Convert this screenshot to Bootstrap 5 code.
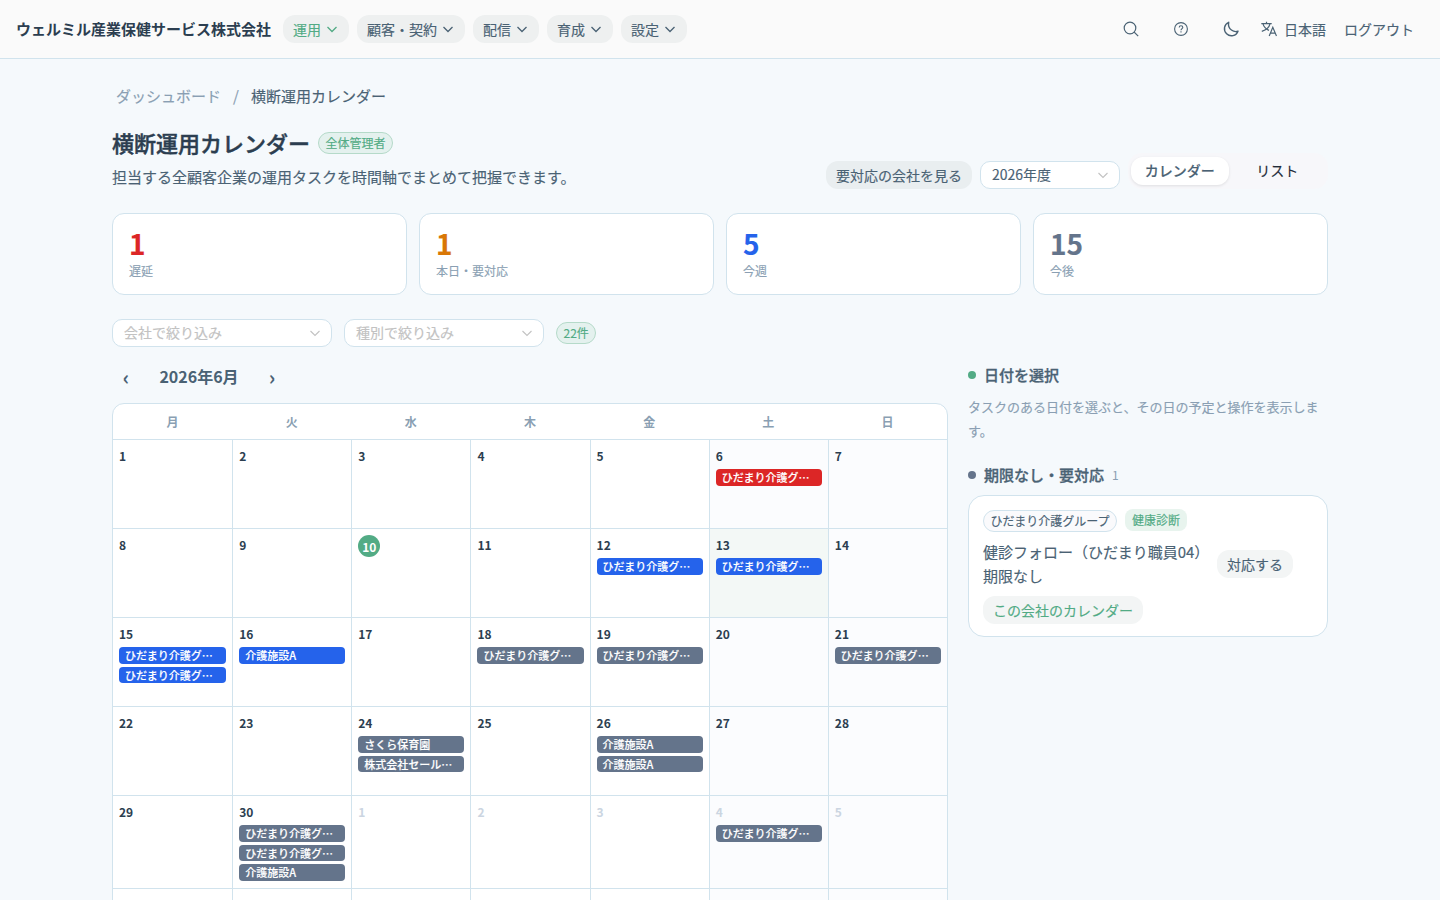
<!DOCTYPE html>
<html lang="ja">
<head>
<meta charset="utf-8">
<meta name="viewport" content="width=device-width, initial-scale=1">
<title>横断運用カレンダー</title>
<link href="https://cdn.jsdelivr.net/npm/bootstrap@5.3.0/dist/css/bootstrap.min.css" rel="stylesheet">
<style>
:root{--ink:#2c3e50;--sub:#4a6274;--mute:#8a9fb3;--line:#d1e3ed;--green:#52ab85;--slate:#64748b;--red:#dc2626;--amber:#d97706;--blue:#2563eb}
html,body{height:900px;overflow:hidden}
body{font-family:"Noto Sans CJK JP",sans-serif;font-size:15px;line-height:24px;background:#f5f9fc;color:var(--sub);-webkit-text-stroke:.15px}
svg{fill:none;stroke:currentColor;flex:none;display:block}
.topbar{height:59px;background:#fafafa;border-bottom:1px solid var(--line);padding:0 16px!important}
.brand{font-weight:700;color:var(--ink);margin-right:12px;-webkit-text-stroke:0}
.pill{--bs-btn-padding-x:10px;--bs-btn-padding-y:0;height:28px;font-size:14px;line-height:26px;border:0;border-radius:12px;background:#eef0f0;color:var(--sub);display:inline-flex;align-items:center;white-space:nowrap;font-weight:400;padding-bottom:1px}
.pill.on,.go{color:var(--green)}
.navtext{font-size:14px;line-height:26px;padding-bottom:1px}
.icobtn{width:50px;display:flex;justify-content:center}
.wrap{width:1216px;margin:0 auto}
.crumbs{height:24px;margin-top:25px;padding-left:4px}
.title{font-size:22px;line-height:30px;font-weight:500;color:var(--ink);margin:0;-webkit-text-stroke:.45px}
.tag{font-size:12px;line-height:20px;height:22px;border:1px solid #b5dac9;border-radius:11px;background:#e4f1ee;color:var(--green);padding:0 6.500px;font-weight:400;white-space:nowrap}
.sel{height:28px;background:#fff;border:1px solid var(--line);border-radius:10px;padding:0 11px;font-size:14px;line-height:26px;font-weight:400;display:flex;align-items:center;justify-content:space-between}
.sel>span{margin-top:-2px}
.sel svg{color:#c2c2c2;margin-right:-1px}
.ph{color:#c2c2c2}
.seg{width:200px;height:36px;background:#f7f7fa;border-radius:14px;padding:4px 2px 4px 3px;color:#222b38;font-size:14px}
.seg span{flex:1;height:28px;line-height:27px;text-align:center;border-radius:12px}
.seg .on{background:#fff;color:var(--sub);box-shadow:0 1px 3px rgba(0,0,0,.1);font-weight:500}
.stats{display:grid;grid-template-columns:repeat(4,1fr);gap:12px}
.stat{height:82px;border:1px solid var(--line);border-radius:12px;background:#fff;padding:13px 16px}
.stat b{display:block;font-size:28px;line-height:33px;font-weight:700}
.stat span{display:block;font-size:12px;line-height:18px;color:var(--mute);margin-top:2px;font-weight:400}
.cal{width:836px;border:1px solid var(--line);border-radius:12px 12px 0 0;background:#fff;overflow:hidden}
.days{display:grid;grid-template-columns:repeat(7,1fr);-webkit-text-stroke:0}
.wd{height:35px;line-height:36px;font-size:12px;font-weight:600;text-align:center;color:var(--mute)}
.cell{border-top:1px solid var(--line);border-left:1px solid var(--line);min-height:89px;padding:6px 6px 4.500px;min-width:0}
.cell:nth-child(7n+1){border-left:0}
.cell:nth-child(7n),.cell:nth-child(7n+6){background:#fbfcfe}
.cell.pick{background:#f3f8f6!important}
.num{font-size:12px;line-height:19px;height:19px;margin-bottom:4px;font-weight:600;color:var(--ink)}
.num.off{color:#cbd5e1}
.num i{display:block;font-style:normal;width:22px;height:22px;line-height:24px;border-radius:50%;background:var(--green);color:#fff;text-align:center;font-weight:700}
.ev{font-size:11px;line-height:16.500px;height:16.500px;border-radius:4px;padding:0 6px;color:#fff;background:var(--slate);font-weight:500;margin-bottom:3px;overflow:hidden;white-space:nowrap;text-overflow:ellipsis;-webkit-text-stroke:.15px}
.ev.b{background:var(--blue)}.ev.r{background:var(--red)}
.side{width:360px}
.dot{width:8px;height:8px;border-radius:50%;background:var(--green);margin-right:8px}
.shead{height:24px;font-weight:500;-webkit-text-stroke:.3px}
.hint{font-size:13px;line-height:24px;color:var(--mute);margin:8px 0 20px}
.task{border:1px solid var(--line);border-radius:16px;background:#fff;height:142px;padding:13px 14px 12px}
.co{border-color:var(--line);background:#fafafc;color:var(--sub)}
.kind{border:0;border-radius:8px;background:#e8f4ee;line-height:22px;padding:0 7px}
.soft{background:#f3f5f5}
.arrow{width:28px;font-size:20px;padding-top:1px;text-align:center}
</style>
</head>
<body>
<nav class="topbar navbar d-flex flex-nowrap justify-content-start align-items-center">
  <span class="brand">ウェルミル産業保健サービス株式会社</span>
  <div class="d-flex gap-2">
    <button class="btn pill on">運用<svg class="ms-1" width="14" height="14" viewBox="0 0 14 14" stroke-width="1.300"><path d="M2.500 5 7 9.500 11.500 5"/></svg></button>
    <button class="btn pill">顧客・契約<svg class="ms-1" width="14" height="14" viewBox="0 0 14 14" stroke-width="1.300"><path d="M2.500 5 7 9.500 11.500 5"/></svg></button>
    <button class="btn pill">配信<svg class="ms-1" width="14" height="14" viewBox="0 0 14 14" stroke-width="1.300"><path d="M2.500 5 7 9.500 11.500 5"/></svg></button>
    <button class="btn pill">育成<svg class="ms-1" width="14" height="14" viewBox="0 0 14 14" stroke-width="1.300"><path d="M2.500 5 7 9.500 11.500 5"/></svg></button>
    <button class="btn pill">設定<svg class="ms-1" width="14" height="14" viewBox="0 0 14 14" stroke-width="1.300"><path d="M2.500 5 7 9.500 11.500 5"/></svg></button>
  </div>
  <div class="d-flex align-items-center ms-auto">
    <span class="icobtn"><svg width="18" height="18" viewBox="0 0 18 18" stroke-width="1.200"><circle cx="8" cy="8" r="5.800"/><path d="m12.200 12.200 4 4"/></svg></span>
    <span class="icobtn"><svg width="16" height="16" viewBox="0 0 16 16" stroke-width="1.100"><circle cx="8" cy="8" r="6.400"/><path d="M6.200 6.500c0-1 .8-1.700 1.800-1.700s1.800.7 1.800 1.600c0 1.200-1.800 1.300-1.800 2.900"/><path d="M8 10.300v1.100"/></svg></span>
    <span class="icobtn"><svg width="18" height="18" viewBox="0 0 18 18" stroke-width="1.400" stroke-linejoin="round"><path d="M6.700 2.300A7 7 0 1 0 16 11.200C12.300 12.700 5.300 9.600 6.700 2.300Z"/></svg></span>
    <span class="d-flex align-items-center" style="margin-left:5px"><svg width="16" height="16" viewBox="0 0 16 16" stroke-width="1.200"><path d="M.3 2.700h10.400M5.500.8v1.900M2 2.900c.8 3 3.200 5.300 6 6.500M9 2.900C8.200 6.300 5 9.100.8 10.300"/><path d="m8.200 15 3.600-8.700L15.500 15M9.400 12.100h4.900"/></svg><span class="navtext" style="margin-left:7px">日本語</span></span>
    <span class="navtext" style="margin:0 10px 0 18px">ログアウト</span>
  </div>
</nav>
<main class="wrap">
  <div class="crumbs d-flex"><span style="color:var(--mute)">ダッシュボード</span><span style="color:var(--mute);margin:0 12px">/</span><span>横断運用カレンダー</span></div>
  <header class="d-flex justify-content-between" style="margin-top:19px">
    <div>
      <div class="d-flex align-items-center gap-2"><h1 class="title">横断運用カレンダー</h1><span class="tag" style="margin-top:2px">全体管理者</span></div>
      <div style="margin-top:8px">担当する全顧客企業の運用タスクを時間軸でまとめて把握できます。</div>
    </div>
    <div class="d-flex align-items-end gap-2">
      <button class="btn pill" style="background:#e9eef0">要対応の会社を見る</button>
      <div class="sel" style="width:140px"><span>2026年度</span><svg width="12" height="12" viewBox="0 0 12 12" stroke-width="1.100"><path d="m1.500 4 4.500 4.500L10.500 4"/></svg></div>
      <div class="seg d-flex"><span class="on">カレンダー</span><span>リスト</span></div>
    </div>
  </header>
  <section class="stats" style="margin-top:24px">
    <div class="stat"><b style="color:var(--red)">1</b><span>遅延</span></div>
    <div class="stat"><b style="color:var(--amber)">1</b><span>本日・要対応</span></div>
    <div class="stat"><b style="color:var(--blue)">5</b><span>今週</span></div>
    <div class="stat"><b style="color:var(--slate)">15</b><span>今後</span></div>
  </section>
  <div class="d-flex align-items-center" style="gap:12px;margin-top:24px">
    <div class="sel ph" style="width:220px"><span>会社で絞り込み</span><svg width="12" height="12" viewBox="0 0 12 12" stroke-width="1.100"><path d="m1.500 4 4.500 4.500L10.500 4"/></svg></div>
    <div class="sel ph" style="width:200px"><span>種別で絞り込み</span><svg width="12" height="12" viewBox="0 0 12 12" stroke-width="1.100"><path d="m1.500 4 4.500 4.500L10.500 4"/></svg></div>
    <span class="tag">22件</span>
  </div>
  <div class="d-flex" style="gap:20px;margin-top:16px">
    <section>
      <div class="d-flex align-items-center" style="height:26px;margin-bottom:14px;font-weight:600;-webkit-text-stroke:0">
        <span class="arrow">‹</span>
        <span class="text-center" style="width:118px;font-size:16px">2026年6月</span>
        <span class="arrow">›</span>
      </div>
      <div class="cal">
        <div class="days"><div class="wd">月</div><div class="wd">火</div><div class="wd">水</div><div class="wd">木</div><div class="wd">金</div><div class="wd">土</div><div class="wd">日</div></div>
        <div class="days">
          <div class="cell"><div class="num">1</div></div>
          <div class="cell"><div class="num">2</div></div>
          <div class="cell"><div class="num">3</div></div>
          <div class="cell"><div class="num">4</div></div>
          <div class="cell"><div class="num">5</div></div>
          <div class="cell"><div class="num">6</div><div class="ev r">ひだまり介護グループ</div></div>
          <div class="cell"><div class="num">7</div></div>
          <div class="cell"><div class="num">8</div></div>
          <div class="cell"><div class="num">9</div></div>
          <div class="cell"><div class="num"><i>10</i></div></div>
          <div class="cell"><div class="num">11</div></div>
          <div class="cell"><div class="num">12</div><div class="ev b">ひだまり介護グループ</div></div>
          <div class="cell pick"><div class="num">13</div><div class="ev b">ひだまり介護グループ</div></div>
          <div class="cell"><div class="num">14</div></div>
          <div class="cell"><div class="num">15</div><div class="ev b">ひだまり介護グループ</div><div class="ev b">ひだまり介護グループ</div></div>
          <div class="cell"><div class="num">16</div><div class="ev b">介護施設A</div></div>
          <div class="cell"><div class="num">17</div></div>
          <div class="cell"><div class="num">18</div><div class="ev">ひだまり介護グループ</div></div>
          <div class="cell"><div class="num">19</div><div class="ev">ひだまり介護グループ</div></div>
          <div class="cell"><div class="num">20</div></div>
          <div class="cell"><div class="num">21</div><div class="ev">ひだまり介護グループ</div></div>
          <div class="cell"><div class="num">22</div></div>
          <div class="cell"><div class="num">23</div></div>
          <div class="cell"><div class="num">24</div><div class="ev">さくら保育園</div><div class="ev">株式会社セールスサポート</div></div>
          <div class="cell"><div class="num">25</div></div>
          <div class="cell"><div class="num">26</div><div class="ev">介護施設A</div><div class="ev">介護施設A</div></div>
          <div class="cell"><div class="num">27</div></div>
          <div class="cell"><div class="num">28</div></div>
          <div class="cell"><div class="num">29</div></div>
          <div class="cell"><div class="num">30</div><div class="ev">ひだまり介護グループ</div><div class="ev">ひだまり介護グループ</div><div class="ev">介護施設A</div></div>
          <div class="cell"><div class="num off">1</div></div>
          <div class="cell"><div class="num off">2</div></div>
          <div class="cell"><div class="num off">3</div></div>
          <div class="cell"><div class="num off">4</div><div class="ev">ひだまり介護グループ</div></div>
          <div class="cell"><div class="num off">5</div></div>
          <div class="cell"></div><div class="cell"></div><div class="cell"></div><div class="cell"></div><div class="cell"></div><div class="cell"></div><div class="cell"></div>
        </div>
      </div>
    </section>
    <aside class="side">
      <div class="shead d-flex align-items-center"><span class="dot"></span>日付を選択</div>
      <p class="hint">タスクのある日付を選ぶと、その日の予定と操作を表示します。</p>
      <div class="shead d-flex align-items-center" style="margin-bottom:8px"><span class="dot" style="background:var(--slate)"></span>期限なし・要対応<span class="ms-2" style="font-size:12px;font-weight:400;color:var(--mute);-webkit-text-stroke:0">1</span></div>
      <div class="task">
        <div class="d-flex gap-2 align-items-start"><span class="tag co" style="margin-top:1px">ひだまり介護グループ</span><span class="tag kind">健康診断</span></div>
        <div class="d-flex align-items-center" style="margin-top:8px;gap:9px"><div style="width:225px;white-space:nowrap">健診フォロー（ひだまり職員04）<br>期限なし</div><button class="btn pill soft">対応する</button></div>
        <button class="btn pill soft go" style="margin-top:8px">この会社のカレンダー</button>
      </div>
    </aside>
  </div>
</main>
<script src="https://cdn.jsdelivr.net/npm/bootstrap@5.3.0/dist/js/bootstrap.bundle.min.js"></script>
</body>
</html>
